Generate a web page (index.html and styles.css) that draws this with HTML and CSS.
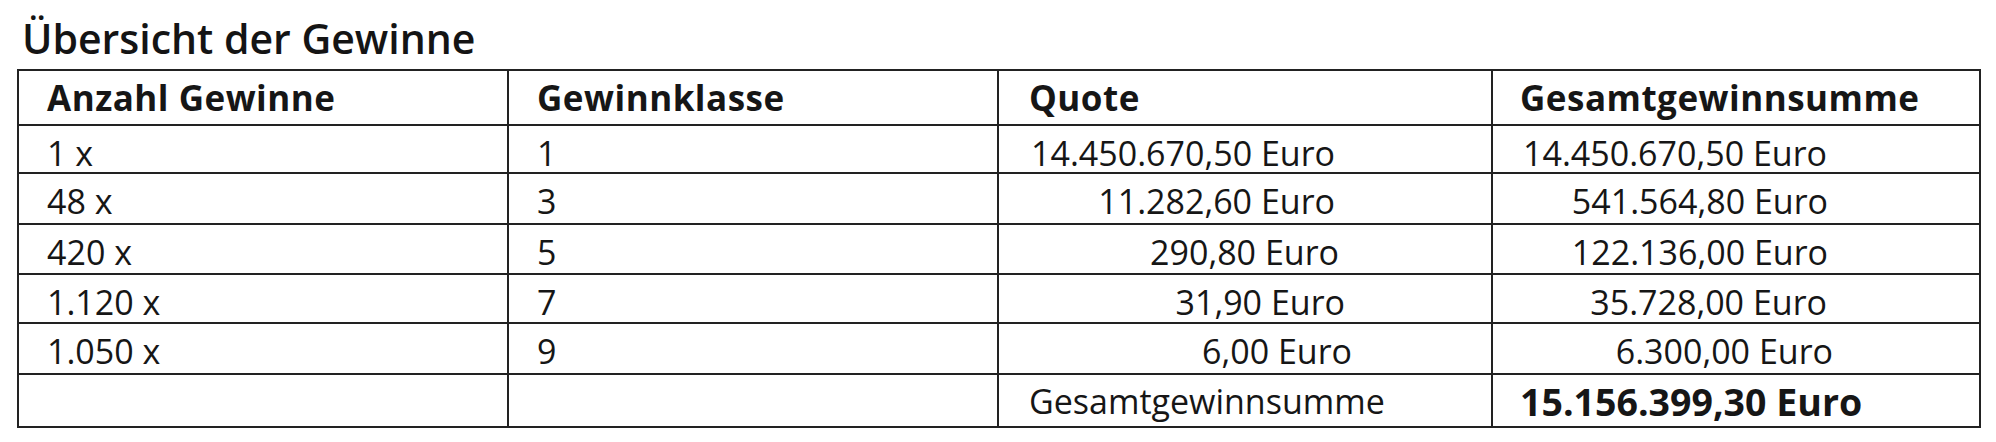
FILE: index.html
```html
<!DOCTYPE html>
<html lang="de">
<head>
<meta charset="utf-8">
<title>Übersicht der Gewinne</title>
<link rel="stylesheet" href="styles.css">
</head>
<body>
<div class="page">
  <h1 class="title">Übersicht der Gewinne</h1>
  <div class="table" role="table">
    <div class="row head" role="row">
      <div class="cell c1" role="columnheader">Anzahl Gewinne</div>
      <div class="cell c2" role="columnheader">Gewinnklasse</div>
      <div class="cell c3" role="columnheader">Quote</div>
      <div class="cell c4" role="columnheader">Gesamtgewinnsumme</div>
    </div>
    <div class="row r1" role="row">
      <div class="cell c1">1 x</div>
      <div class="cell c2">1</div>
      <div class="cell c3 num">14.450.670,50 Euro</div>
      <div class="cell c4 num">14.450.670,50 Euro</div>
    </div>
    <div class="row r2" role="row">
      <div class="cell c1">48 x</div>
      <div class="cell c2">3</div>
      <div class="cell c3 num">11.282,60 Euro</div>
      <div class="cell c4 num">541.564,80 Euro</div>
    </div>
    <div class="row r3" role="row">
      <div class="cell c1">420 x</div>
      <div class="cell c2">5</div>
      <div class="cell c3 num">290,80 Euro</div>
      <div class="cell c4 num">122.136,00 Euro</div>
    </div>
    <div class="row r4" role="row">
      <div class="cell c1">1.120 x</div>
      <div class="cell c2">7</div>
      <div class="cell c3 num">31,90 Euro</div>
      <div class="cell c4 num">35.728,00 Euro</div>
    </div>
    <div class="row r5" role="row">
      <div class="cell c1">1.050 x</div>
      <div class="cell c2">9</div>
      <div class="cell c3 num">6,00 Euro</div>
      <div class="cell c4 num">6.300,00 Euro</div>
    </div>
    <div class="row total" role="row">
      <div class="cell c1"></div>
      <div class="cell c2"></div>
      <div class="cell c3 label">Gesamtgewinnsumme</div>
      <div class="cell c4 sum">15.156.399,30 Euro</div>
    </div>
  </div>
</div>
</body>
</html>
```

FILE: styles.css
```css
* {
  box-sizing: border-box;
}

html, body {
  margin: 0;
  background: #ffffff;
}

body {
  font-family: "Open Sans", Lato, "Liberation Sans", sans-serif;
  color: #161616;
}

.page {
  width: 1996px;
  height: 442px;
  padding-left: 17px;
}

.title {
  margin: 0;
  padding: 18px 0 0 5px;
  height: 69px;
  font-size: 41px;
  line-height: 40px;
  font-weight: 600;
  color: #141414;
}

.table {
  display: grid;
  grid-template-columns: 490px 490px 494px 488px;
  grid-template-rows: 55px 48px 51px 50px 49px 51px 53px;
  width: max-content;
  border-top: 2px solid #222222;
  border-left: 2px solid #222222;
}

.row {
  display: contents;
}

.cell {
  border-right: 2px solid #222222;
  border-bottom: 2px solid #222222;
  padding: 7px 0 0 28px;
  font-size: 34px;
  line-height: 40px;
  white-space: nowrap;
}

.cell.c3 {
  padding-left: 30px;
}

.cell.c4 {
  padding-left: 27px;
}

.head .cell {
  padding-top: 7px;
  font-size: 35px;
  font-weight: 700;
  letter-spacing: 0.5px;
}

.num {
  text-align: right;
}

.cell.c3.num { padding-left: 0; padding-right: 156px; }
.cell.c4.num { padding-left: 0; padding-right: 151px; }

.r3 .cell.c3.num { padding-right: 152px; }
.r4 .cell.c3.num { padding-right: 146px; }
.r5 .cell.c3.num { padding-right: 139px; }

.r1 .cell.c4.num { padding-right: 152px; }
.r4 .cell.c4.num { padding-right: 152px; }
.r5 .cell.c4.num { padding-right: 146px; }

.total .label {
  padding-top: 6px;
}

.total .sum {
  padding-top: 7px;
  font-size: 37.5px;
  font-weight: 700;
}
```
